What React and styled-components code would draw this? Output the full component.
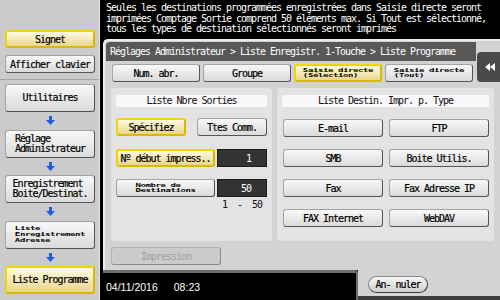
import styled, { createGlobalStyle, css } from "styled-components"

//Global page reset
const GlobalStyle = createGlobalStyle`
  html, body {
    margin: 0;
    padding: 0;
  }
  body {
    width: 500px;
    height: 300px;
    overflow: hidden;
    background: #000;
  }
`

const mono = `"DejaVu Sans Mono", "Liberation Mono", monospace`

//Styled components
const Screen = styled.div`
  display: grid;
  grid-template-columns: 100px 400px;
  width: 500px;
  height: 300px;
  font-family: ${mono};
  font-size: 10px;
  letter-spacing: -1.02px;
  color: #111;
`

const Sidebar = styled.div`
  background: #cbcbcb;
  border-right: 1px solid #e6e6e6;
  display: flex;
  flex-direction: column;
`

const SideTop = styled.div`
  height: 80px;
  box-sizing: border-box;
  padding: 30px 4px 0 5px;
  display: flex;
  flex-direction: column;
  gap: 7px;
  border-bottom: 1px solid #a4a4a4;
`

const SideFlow = styled.div`
  padding: 4px 4px 0 5px;
  display: flex;
  flex-direction: column;
`

const raised = css`
  box-sizing: border-box;
  display: flex;
  align-items: center;
  justify-content: center;
  height: ${props => props.$h || 18}px;
  border-radius: 3px;
  border: 1px solid #a4a4a4;
  border-right-color: #555;
  border-bottom-color: #555;
  background: linear-gradient(#f8f8f8, #dadada);
  white-space: pre;
  color: #000;
  -webkit-text-stroke: 0.2px #000;
`

const Button = styled.div`
  ${raised}
  ${props => props.$active && css`
    border: 2px solid #f3d300;
    border-right-color: #d9b800;
    border-bottom-color: #d9b800;
    background: linear-gradient(#fffbe4, #e8d68c);
  `}
`

const Disabled = styled.div`
  ${raised}
  width: 110px;
  margin: 6px 0 0 5px;
  color: #a0a0a0;
  -webkit-text-stroke: 0;
  background: #cbcbcb;
  border-color: #b0b0b0;
  border-right-color: #8a8a8a;
  border-bottom-color: #8a8a8a;
`

const Label = styled.span`
  display: inline-block;
  text-align: left;
  line-height: 10px;
`

const Squashed = styled(Label)`
  font-size: 9px;
  line-height: 9px;
  letter-spacing: -0.4px;
  font-weight: bold;
  -webkit-text-stroke: 0;
  transform: scaleY(0.62);
`

const ArrowRow = styled.div`
  height: 17.5px;
  display: flex;
  align-items: center;
  justify-content: center;
`

const Main = styled.div`
  display: flex;
  flex-direction: column;
  background: #000;
`

const Banner = styled.div`
  height: 39px;
  box-sizing: border-box;
  padding: 3px 0 0 6px;
  color: #fff;
  line-height: 10.5px;
  white-space: pre;
`

const Frame = styled.div`
  flex: 1;
  margin-left: 3px;
  padding: 1px 0 0 1px;
  background: #d3d3d3;
  border-top: 2px solid #ececec;
  border-left: 2px solid #ececec;
  border-top-left-radius: 5px;
  display: flex;
  flex-direction: column;
`

const TopBlock = styled.div`
  display: grid;
  grid-template-columns: 370px 24px;
`

const Crumbs = styled.div`
  height: 19px;
  display: flex;
  align-items: center;
  padding-left: 4px;
  background: #585858;
  border-top-left-radius: 4px;
  color: #fff;
  white-space: pre;
`

const Tabs = styled.div`
  display: grid;
  grid-template-columns: repeat(4, 88px);
  gap: 3px;
  margin-top: 3px;
  padding-left: 6px;
`

const SideTab = styled.div`
  margin: 10px 0 0 1px;
  height: 30px;
  display: flex;
  align-items: center;
  justify-content: center;
  padding-left: 2px;
  background: #4a4a4a;
  border-radius: 4px 0 0 4px;
`

const Panels = styled.div`
  display: grid;
  grid-template-columns: 161px 217px;
  gap: 5px;
  height: 153px;
  margin-top: 6px;
  padding-left: 5px;
`

const Panel = styled.div`
  background: #e3e3e3;
  border-radius: 4px;
  padding: 7px 5px 0;
`

const PanelTitle = styled.div`
  height: 12px;
  line-height: 12px;
  text-align: center;
  background: #f9f7f9;
  white-space: pre;
`

const ChoiceRow = styled.div`
  display: flex;
  justify-content: space-between;
  margin-top: 11px;

  & > * {
    width: 70px;
  }
`

const FieldRow = styled.div`
  display: grid;
  grid-template-columns: 99px 50px;
  gap: 2px;
  margin-top: ${props => props.$gap}px;
`

const Value = styled.div`
  box-sizing: border-box;
  height: 18px;
  display: flex;
  align-items: center;
  justify-content: flex-end;
  padding-right: 15px;
  background: #333;
  border: 1px solid #1c1c1c;
  color: #fff;
`

const Range = styled.div`
  grid-column: 2;
  text-align: center;
  white-space: pre;
  line-height: 10px;
`

const TypeGrid = styled.div`
  display: grid;
  grid-template-columns: 100px 100px;
  column-gap: 6px;
  row-gap: 12px;
  margin-top: 12px;
  padding-left: 1px;
`

const Footer = styled.div`
  display: flex;
  height: 30px;
`

const StatusBar = styled.div`
  width: 255px;
  margin-left: 3px;
  display: flex;
  align-items: center;
  gap: 16px;
  padding: 0 0 0 3px;
  box-sizing: border-box;
  background: #000;
  border-top: 3px solid #6e6e6e;
  border-right: 2px solid #6e6e6e;
  border-top-right-radius: 3px;
  color: #fff;
  font-family: "Liberation Sans", Arial, sans-serif;
  font-size: 10.5px;
  letter-spacing: 0;
`

const CancelArea = styled.div`
  flex: 1;
  display: flex;
  align-items: center;
  padding: 3px 0 0 10px;
  background: #d3d3d3;
  border-bottom: 4px solid #3c3c3c;
`

const Pill = styled.div`
  ${raised}
  width: 60px;
  height: 17px;
  border-radius: 9px;
  border-color: #8a8a8a;
  border-right-color: #3c3c3c;
  border-bottom-color: #3c3c3c;
  background: linear-gradient(#f6f6f6, #cfcfcf);
`

//Icons
const DownArrow = () => (
  <svg width="9" height="9" viewBox="0 0 9 9">
    <rect x="3" y="0" width="3" height="4" fill="#1d5ee4" />
    <polygon points="0,4 9,4 4.5,9" fill="#1d5ee4" />
  </svg>
)

const Rewind = () => (
  <svg width="10" height="8" viewBox="0 0 10 8">
    <polygon points="5,0 0,4 5,8" fill="#fff" />
    <polygon points="10,0 5,4 10,8" fill="#fff" />
  </svg>
)

const flow = [
  { key: "util", label: "Utilitaires" },
  { key: "admin", label: "Réglage\nAdministrateur" },
  { key: "enreg", label: "Enregistrement\nBoite/Destinat." },
  { key: "adr", label: "Liste\nEnregistrement\nAdresse", small: true },
  { key: "prog", label: "Liste Programme", active: true },
]

const types = ["E-mail", "FTP", "SMB", "Boite Utilis.", "Fax", "Fax Adresse IP", "FAX Internet", "WebDAV"]

const banner =
  "Seules les destinations programmées enregistrées dans Saisie directe seront\n" +
  "imprimées Comptage Sortie comprend 50 éléments max. Si Tout est sélectionné,\n" +
  "tous les types de destination sélectionnés seront imprimés"

const App = () => {
  return (
    <>
      <GlobalStyle />
      <Screen>
        <Sidebar>
          <SideTop>
            <Button $active>Signet</Button>
            <Button>Afficher clavier</Button>
          </SideTop>
          <SideFlow>
            {flow.map((item, i) => (
              <div key={item.key}>
                {i > 0 && (
                  <ArrowRow>
                    <DownArrow />
                  </ArrowRow>
                )}
                <Button $h={28} $active={item.active}>
                  {item.small ? <Squashed>{item.label}</Squashed> : <Label>{item.label}</Label>}
                </Button>
              </div>
            ))}
          </SideFlow>
        </Sidebar>

        <Main>
          <Banner>{banner}</Banner>
          <Frame>
            <TopBlock>
              <div>
                <Crumbs>Réglages Administrateur &gt; Liste Enregistr. 1-Touche &gt; Liste Programme</Crumbs>
                <Tabs>
                  <Button>Num. abr.</Button>
                  <Button>Groupe</Button>
                  <Button $active>
                    <Squashed>{"Saisie directe\n(Sélection)"}</Squashed>
                  </Button>
                  <Button>
                    <Squashed>{"Saisie directe\n(Tout)"}</Squashed>
                  </Button>
                </Tabs>
              </div>
              <SideTab>
                <Rewind />
              </SideTab>
            </TopBlock>

            <Panels>
              <Panel>
                <PanelTitle>Liste Nbre Sorties</PanelTitle>
                <ChoiceRow>
                  <Button $active>Spécifiez</Button>
                  <Button>Ttes Comm.</Button>
                </ChoiceRow>
                <FieldRow $gap={13}>
                  <Button $active>Nº début impress..</Button>
                  <Value>1</Value>
                </FieldRow>
                <FieldRow $gap={12}>
                  <Button>
                    <Squashed>{"Nombre de\nDestinations"}</Squashed>
                  </Button>
                  <Value>50</Value>
                </FieldRow>
                <FieldRow $gap={3}>
                  <Range>{"1  -  50"}</Range>
                </FieldRow>
              </Panel>
              <Panel>
                <PanelTitle>Liste Destin. Impr. p. Type</PanelTitle>
                <TypeGrid>
                  {types.map(t => (
                    <Button key={t}>{t}</Button>
                  ))}
                </TypeGrid>
              </Panel>
            </Panels>

            <Disabled>Impression</Disabled>
          </Frame>
          <Footer>
            <StatusBar>
              <span>04/11/2016</span>
              <span>08:23</span>
            </StatusBar>
            <CancelArea>
              <Pill>An- nuler</Pill>
            </CancelArea>
          </Footer>
        </Main>
      </Screen>
    </>
  )
}

export default App
